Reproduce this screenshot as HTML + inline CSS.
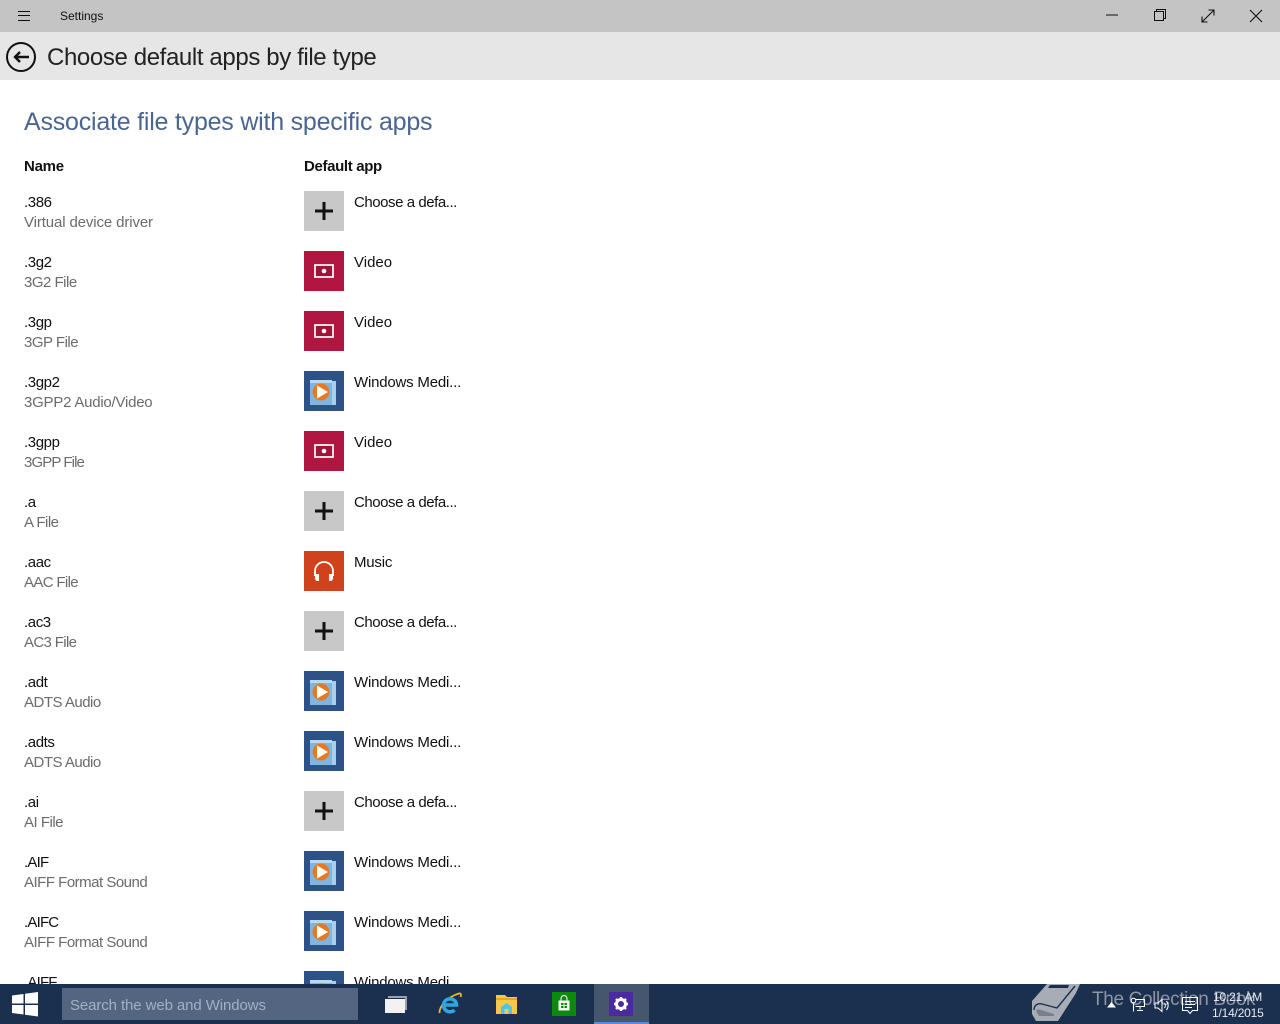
<!DOCTYPE html>
<html><head><meta charset="utf-8"><title>Settings</title>
<style>
html,body{margin:0;padding:0;width:1280px;height:1024px;overflow:hidden;background:#fff;font-family:"Liberation Sans",sans-serif}
.a{position:absolute;white-space:nowrap}
.t{font-size:15px;line-height:20px;color:#111;margin-top:1px;letter-spacing:-.2px}
.g{font-size:15px;line-height:20px;color:#6b6b6b;margin-top:1px;letter-spacing:-.5px}
.k{letter-spacing:-.4px}
.n{letter-spacing:-.8px}
.c{letter-spacing:-.45px}
.v{letter-spacing:0}
.i{position:absolute;left:304px;width:40px;height:40px}
svg{position:absolute;display:block;overflow:visible}
</style></head><body>
<svg width="0" height="0" style="position:absolute"><defs>
<g id="plus"><rect width="40" height="40" fill="#c8c8c8"/><rect x="11" y="18.500" width="18" height="3" fill="#111"/><rect x="18.500" y="11" width="3" height="18" fill="#111"/></g>
<g id="video"><rect width="40" height="40" fill="#b01640"/><rect x="11" y="14" width="18" height="12" fill="#a01238" stroke="#fff" stroke-width="1.700"/><circle cx="20" cy="20" r="2.300" fill="#fff"/></g>
<g id="wmp"><rect width="40" height="40" fill="#2d5287"/><rect x="28" y="10" width="4" height="24" fill="#a8d0ea"/><rect x="6" y="9" width="22" height="25" fill="#7fb6e0"/><rect x="6" y="9" width="22" height="3" fill="#b8daf0"/><circle cx="17" cy="21" r="8.500" fill="#e8791f"/><path d="M13 14.500L24 21 13 27.500Z" fill="#fff"/></g>
<g id="music"><rect width="40" height="40" fill="#d0421b"/><path d="M11 25V20a9 9 0 0 1 18 0v5" fill="none" stroke="#fff" stroke-width="1.800"/><path d="M11 23h4v7h-2a3 3 0 0 1-2-3ZM29 23h-4v7h2a3 3 0 0 0 2-3Z" fill="#fff"/></g>
</defs></svg>

<div class="a" style="left:0;top:0;width:1280px;height:32px;background:#c4c4c4"></div>
<svg style="left:18px;top:10px" width="12" height="12"><path d="M0 1.500H12M0 5.500H12M0 10.500H12" stroke="#111" stroke-width="1"/></svg>
<div class="a" style="left:60px;top:6px;font-size:12px;line-height:20px;color:#111">Settings</div>
<svg style="left:1105px;top:14px" width="14" height="4"><path d="M1 1H13" stroke="#111" stroke-width="1"/></svg>
<svg style="left:1153px;top:9px" width="14" height="14"><path d="M3.500 2.500V.5H12.500V9.500H10.500" fill="none" stroke="#111"/><rect x="1.500" y="2.500" width="9" height="9" fill="none" stroke="#111"/></svg>
<svg style="left:1201px;top:9px" width="14" height="14"><path d="M1 13L13 1M7.500 1H13V6.500M1 7.500V13H6.500" fill="none" stroke="#111" stroke-width="1.100"/></svg>
<svg style="left:1250px;top:10px" width="12" height="12"><path d="M0 0L12 12M12 0L0 12" stroke="#111" stroke-width="1.100"/></svg>

<div class="a" style="left:0;top:32px;width:1280px;height:48px;background:#e6e6e6"></div>
<svg style="left:5px;top:42px" width="32" height="32"><circle cx="16" cy="15" r="14" fill="none" stroke="#111" stroke-width="2"/><path d="M10 15H24M15 10L10 15L15 20" fill="none" stroke="#111" stroke-width="2.400"/></svg>
<div class="a" style="left:47px;top:42px;font-size:24px;line-height:32px;color:#222;letter-spacing:-.38px">Choose default apps by file type</div>

<div class="a" style="left:24px;top:104px;font-size:25px;line-height:36px;color:#4a6690;letter-spacing:-.22px">Associate file types with specific apps</div>
<div class="a t" style="left:24px;top:156px;font-weight:bold;letter-spacing:-.25px">Name</div>
<div class="a t" style="left:304px;top:156px;font-weight:bold;letter-spacing:-.35px">Default app</div>

<div class="a t k" style="left:24px;top:192px">.386</div><div class="a g" style="left:24px;top:212px;letter-spacing:-.12px">Virtual device driver</div><svg class="i" style="top:191px"><use href="#plus"/></svg><div class="a t c" style="left:354px;top:192px">Choose a defa...</div>
<div class="a t k" style="left:24px;top:252px">.3g2</div><div class="a g" style="left:24px;top:272px">3G2 File</div><svg class="i" style="top:251px"><use href="#video"/></svg><div class="a t v" style="left:354px;top:252px">Video</div>
<div class="a t k" style="left:24px;top:312px">.3gp</div><div class="a g" style="left:24px;top:332px">3GP File</div><svg class="i" style="top:311px"><use href="#video"/></svg><div class="a t v" style="left:354px;top:312px">Video</div>
<div class="a t k" style="left:24px;top:372px">.3gp2</div><div class="a g" style="left:24px;top:392px;letter-spacing:-.23px">3GPP2 Audio/Video</div><svg class="i" style="top:371px"><use href="#wmp"/></svg><div class="a t" style="left:354px;top:372px">Windows Medi...</div>
<div class="a t k" style="left:24px;top:432px">.3gpp</div><div class="a g" style="left:24px;top:452px;letter-spacing:-.9px">3GPP File</div><svg class="i" style="top:431px"><use href="#video"/></svg><div class="a t v" style="left:354px;top:432px">Video</div>
<div class="a t k" style="left:24px;top:492px">.a</div><div class="a g" style="left:24px;top:512px">A File</div><svg class="i" style="top:491px"><use href="#plus"/></svg><div class="a t c" style="left:354px;top:492px">Choose a defa...</div>
<div class="a t k" style="left:24px;top:552px">.aac</div><div class="a g" style="left:24px;top:572px;letter-spacing:-.65px">AAC File</div><svg class="i" style="top:551px"><use href="#music"/></svg><div class="a t" style="left:354px;top:552px">Music</div>
<div class="a t k" style="left:24px;top:612px">.ac3</div><div class="a g" style="left:24px;top:632px;letter-spacing:-.65px">AC3 File</div><svg class="i" style="top:611px"><use href="#plus"/></svg><div class="a t c" style="left:354px;top:612px">Choose a defa...</div>
<div class="a t k" style="left:24px;top:672px">.adt</div><div class="a g" style="left:24px;top:692px">ADTS Audio</div><svg class="i" style="top:671px"><use href="#wmp"/></svg><div class="a t" style="left:354px;top:672px">Windows Medi...</div>
<div class="a t k" style="left:24px;top:732px">.adts</div><div class="a g" style="left:24px;top:752px">ADTS Audio</div><svg class="i" style="top:731px"><use href="#wmp"/></svg><div class="a t" style="left:354px;top:732px">Windows Medi...</div>
<div class="a t k" style="left:24px;top:792px">.ai</div><div class="a g" style="left:24px;top:812px">AI File</div><svg class="i" style="top:791px"><use href="#plus"/></svg><div class="a t c" style="left:354px;top:792px">Choose a defa...</div>
<div class="a t n" style="left:24px;top:852px">.AIF</div><div class="a g" style="left:24px;top:872px">AIFF Format Sound</div><svg class="i" style="top:851px"><use href="#wmp"/></svg><div class="a t" style="left:354px;top:852px">Windows Medi...</div>
<div class="a t n" style="left:24px;top:912px">.AIFC</div><div class="a g" style="left:24px;top:932px">AIFF Format Sound</div><svg class="i" style="top:911px"><use href="#wmp"/></svg><div class="a t" style="left:354px;top:912px">Windows Medi...</div>
<div class="a t n" style="left:24px;top:972px">.AIFF</div><svg class="i" style="top:971px"><use href="#wmp"/></svg><div class="a t" style="left:354px;top:972px">Windows Medi...</div>

<div class="a" style="left:0;top:984px;width:1280px;height:40px;background:#1b2f4e"></div>
<svg style="left:12px;top:991px" width="26" height="26"><path d="M0 4.500L11.500 3V12.500H0ZM13 2.800L26 1V12.500H13ZM0 14H11.500V23.500L0 22ZM13 14H26V25.500L13 23.700Z" fill="#fff"/></svg>
<div class="a" style="left:62px;top:988px;width:296px;height:32px;background:#536581"></div>
<div class="a" style="left:70px;top:997px;font-size:15px;line-height:18px;color:#a4b0c2;letter-spacing:-.1px">Search the web and Windows</div>

<svg style="left:385px;top:996px" width="22" height="17"><path d="M3 2V0H22V14H20V2Z" fill="#9aa3ae"/><rect y="3" width="20" height="14" fill="#f2f2f2"/></svg>
<svg style="left:438px;top:992px" width="24" height="24"><path d="M1.500 21C1 15 9 5 21 1.500C23 1 23.500 3 22.500 5" fill="none" stroke="#f0b429" stroke-width="1.800"/><path d="M7 13H18.500A6.500 6.500 0 1 0 16.500 18" fill="none" stroke="#2fa6e0" stroke-width="3.600"/></svg>
<svg style="left:496px;top:994px" width="22" height="20"><path d="M0 1H9L11 3H21V20H0Z" fill="#f5c84a"/><rect y="4" width="21" height="2" fill="#e0a92c"/><path d="M5 20V13L10.500 9L16 13V20Z" fill="#4fc3e8"/><rect x="8.500" y="15" width="4" height="5" fill="#f5c84a"/></svg>
<svg style="left:552px;top:992px" width="24" height="24"><rect width="24" height="24" fill="#0b8a0b"/><path d="M6.500 8.500H17.500V18.500H6.500Z" fill="#f2f7f2"/><path d="M9 8.500V6.500a3 3 0 0 1 6 0V8.500" fill="none" stroke="#fff"/><path d="M9 11H11.500V13H9ZM12.500 11H15V13H12.500ZM9 14H11.500V16H9ZM12.500 14H15V16H12.500Z" fill="#0b8a0b"/></svg>
<div class="a" style="left:594px;top:984px;width:55px;height:40px;background:#47566f"></div>
<div class="a" style="left:594px;top:1022px;width:55px;height:2px;background:#4f8fdc"></div>
<svg style="left:609px;top:992px" width="24" height="24"><rect width="24" height="24" fill="#4a2a9e"/><circle cx="12" cy="12" r="4.500" fill="none" stroke="#fff" stroke-width="3"/><path d="M12 5V8M12 16V19M5 12H8M16 12H19M7 7L9 9M15 15L17 17M17 7L15 9M9 15L7 17" stroke="#fff" stroke-width="2.400"/></svg>

<svg style="left:1030px;top:984px" width="52" height="38"><path d="M17 0H50L46 9L28 37H6L2 30V17Z" fill="#a8adb5"/><path d="M20 1H39L38 4H18Z" fill="#1b2f4e"/><path d="M4 26C4 21 8 19 12 20L27 24L45 2" fill="none" stroke="#1b2f4e" stroke-width="1.400"/><path d="M6 27C7 25 9 25 11 26L24 30L24 32H9Z" fill="#1b2f4e" opacity=".35"/></svg>
<div class="a" style="left:1092px;top:987px;font-size:19px;line-height:26px;color:#8b95a5;letter-spacing:-.36px">The Collection Book</div>
<svg style="left:1107px;top:1002px" width="10" height="6"><path d="M0 5.500L4.500 0L9 5.500Z" fill="#fff"/></svg>
<svg style="left:1130px;top:997px" width="16" height="16"><path d="M5.500 2.500H14.500V9.500H5.500M10 9.500V12.500M7 13.500H13" fill="none" stroke="#fff"/><circle cx="3.500" cy="3.500" r="2.300" fill="#1b2f4e" stroke="#fff"/><path d="M3.500 6V14.500" stroke="#fff"/></svg>
<svg style="left:1154px;top:998px" width="17" height="15"><path d="M1 5H4L8 1.500V13.500L4 10H1Z" fill="none" stroke="#fff"/><path d="M10.500 5A4 4 0 0 1 10.500 10M12.500 3A7 7 0 0 1 12.500 12" fill="none" stroke="#fff"/></svg>
<svg style="left:1182px;top:997px" width="16" height="18"><path d="M.5.500H15.500V13.500H10.500L8 16.500L5.500 13.500H.5Z" fill="none" stroke="#fff"/><path d="M3 4.500H13M3 7.500H13M3 10.500H10" stroke="#fff"/></svg>
<div class="a" style="left:1213px;top:989px;font-size:12px;line-height:16px;color:#e8ebef;letter-spacing:-.2px">10:21 AM</div>
<div class="a" style="left:1212px;top:1005px;font-size:12px;line-height:16px;color:#e8ebef;letter-spacing:-.2px">1/14/2015</div>
</body></html>
